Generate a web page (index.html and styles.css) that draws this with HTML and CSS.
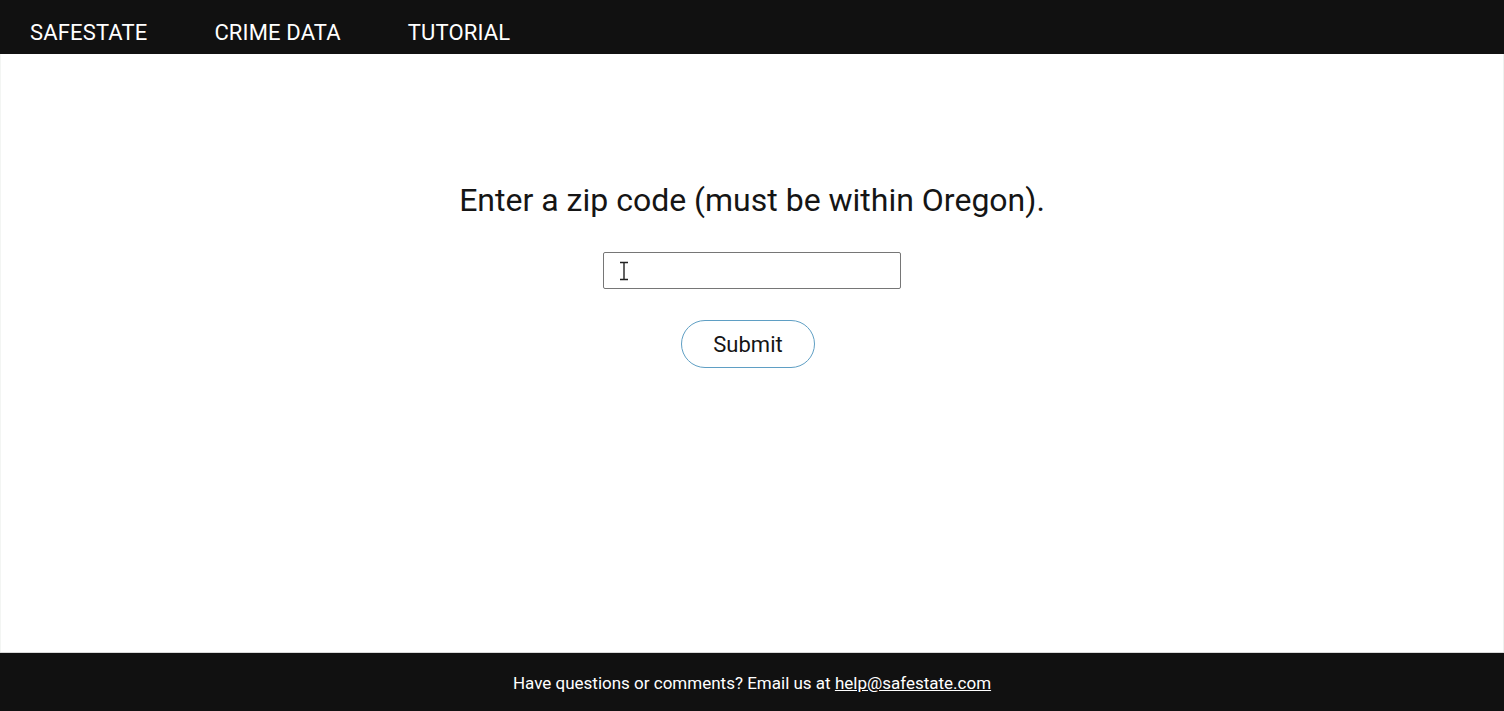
FILE: index.html
```html
<!DOCTYPE html>
<html lang="en">
<head>
<meta charset="utf-8">
<title>SafeState</title>
<link rel="stylesheet" href="styles.css">
</head>
<body>
<div class="page">
  <nav class="topnav">
    <a class="nav-link" href="#">SAFESTATE</a>
    <a class="nav-link" href="#">CRIME DATA</a>
    <a class="nav-link" href="#">TUTORIAL</a>
  </nav>
  <main class="main">
    <h1 class="prompt">Enter a zip code (must be within Oregon).</h1>
    <div class="field-wrap">
      <input class="zip-input" type="text" aria-label="Zip code">
      <svg class="cursor" width="10" height="20" viewBox="0 0 10 20"><path d="M1 1.5h8M1 18.5h8M5 1.5v17" stroke="#222" stroke-width="1.4" fill="none"/></svg>
    </div>
    <button class="submit-btn" type="button">Submit</button>
  </main>
  <footer class="footer">
    <p class="footer-text">Have questions or comments? Email us at <a class="footer-link" href="#">help@safestate.com</a></p>
  </footer>
</div>
</body>
</html>
```
FILE: styles.css
```css
html, body {
  margin: 0;
  padding: 0;
  height: 100%;
}
body {
  font-family: Roboto, "Liberation Sans", sans-serif;
  background: #fff;
  color: #111;
}
.page {
  display: flex;
  flex-direction: column;
  height: 711px;
}
.topnav {
  display: flex;
  align-items: center;
  height: 54px;
  background: #111111;
  padding-left: 30px;
  gap: 67px;
  flex: none;
}
.nav-link {
  color: #ffffff;
  text-decoration: none;
  font-size: 22px;
  line-height: 26px;
  padding-top: 11px;
  letter-spacing: 0.15px;
}
.main {
  flex: 1;
  display: flex;
  flex-direction: column;
  align-items: center;
  padding-top: 126px;
  border-left: 1px solid #f3f5f3;
  border-right: 1px solid #eef1ef;
}
.prompt {
  margin: 0;
  font-weight: 400;
  font-size: 32px;
  line-height: 40px;
  color: #151515;
}
.field-wrap {
  position: relative;
  margin-top: 32px;
}
.zip-input {
  display: block;
  box-sizing: border-box;
  width: 298px;
  height: 37px;
  border: 1px solid #767676;
  border-radius: 2px;
  padding: 0 8px;
  font-size: 16px;
  font-family: Roboto, sans-serif;
  outline: none;
}
.cursor {
  position: absolute;
  left: 16px;
  top: 9px;
}
.submit-btn {
  margin-top: 31px;
  box-sizing: border-box;
  width: 134px;
  height: 48px;
  border: 1.5px solid #5f9fc4;
  border-radius: 24px;
  background: #ffffff;
  font-family: Roboto, sans-serif;
  font-size: 22px;
  color: #151515;
  cursor: pointer;
  padding: 0;
  margin-left: -8px;
}
.footer {
  flex: none;
  height: 59px;
  background: #111111;
  display: flex;
  align-items: center;
  justify-content: center;
  border-top: 1px solid #d8d8d8;
  box-sizing: border-box;
}
.footer-text {
  margin: 0;
  color: #ffffff;
  font-size: 17px;
  line-height: 20px;
  padding-top: 2px;
}
.footer-link {
  color: #ffffff;
  text-decoration: underline;
}
```
